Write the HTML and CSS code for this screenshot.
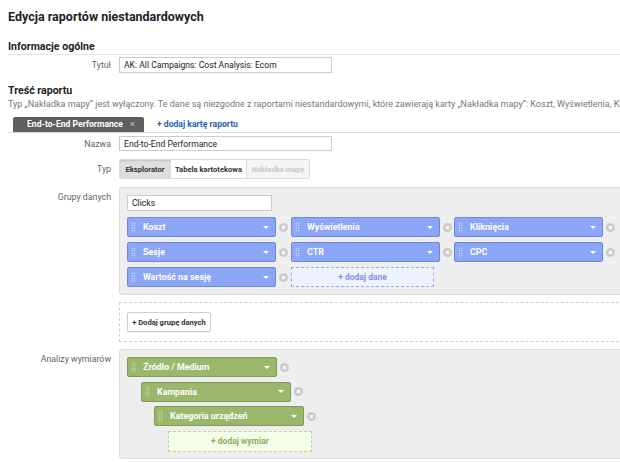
FILE: index.html
```html
<!DOCTYPE html>
<html lang="pl">
<head>
<meta charset="utf-8">
<title>Edycja raportów niestandardowych</title>
<link rel="stylesheet" href="styles.css">
</head>
<body>
<div class="page">
  <h1 class="title">Edycja raportów niestandardowych</h1>
  <h2 class="section">Informacje ogólne</h2>
  <div class="row row-tytul">
    <div class="lbl">Tytuł</div>
    <div class="input input-wide">AK: All Campaigns: Cost Analysis: Ecom</div>
  </div>

  <h2 class="section section-plain">Treść raportu</h2>
  <p class="desc">Typ „Nakładka mapy” jest wyłączony. Te dane są niezgodne z raportami niestandardowymi, które zawierają karty „Nakładka mapy”: Koszt, Wyświetlenia, Kliknięcia, CTR, CPC</p>

  <div class="tabbar">
    <div class="tab">End-to-End Performance <span class="tab-x">×</span></div>
    <a class="addtab">+ dodaj kartę raportu</a>
  </div>

  <div class="row row-nazwa">
    <div class="lbl">Nazwa</div>
    <div class="input input-wide">End-to-End Performance</div>
  </div>

  <div class="row row-typ">
    <div class="lbl">Typ</div>
    <div class="seg">
      <span class="seg-btn seg-active">Eksplorator</span>
      <span class="seg-btn seg-normal">Tabela kartotekowa</span>
      <span class="seg-btn seg-disabled">Nakładka mapy</span>
    </div>
  </div>

  <div class="row row-top row-metrics">
    <div class="lbl lbl-top">Grupy danych</div>
    <div class="box box-metrics">
      <div class="input input-clicks">Clicks</div>
      <div class="metric-grid">
        <div class="item"><div class="chip chip-blue"><span class="grip"></span><span class="chip-text">Koszt</span><span class="caret"></span></div><span class="rm"><svg width="9" height="9" viewBox="0 0 9 9"><circle cx="4.5" cy="4.5" r="4.5" fill="#cbcbcb"/><path d="M3 3L6 6M6 3L3 6" stroke="#fff" stroke-width="1.1"/></svg></span></div>
        <div class="item"><div class="chip chip-blue"><span class="grip"></span><span class="chip-text">Wyświetlenia</span><span class="caret"></span></div><span class="rm"><svg width="9" height="9" viewBox="0 0 9 9"><circle cx="4.5" cy="4.5" r="4.5" fill="#cbcbcb"/><path d="M3 3L6 6M6 3L3 6" stroke="#fff" stroke-width="1.1"/></svg></span></div>
        <div class="item"><div class="chip chip-blue"><span class="grip"></span><span class="chip-text">Kliknięcia</span><span class="caret"></span></div><span class="rm"><svg width="9" height="9" viewBox="0 0 9 9"><circle cx="4.5" cy="4.5" r="4.5" fill="#cbcbcb"/><path d="M3 3L6 6M6 3L3 6" stroke="#fff" stroke-width="1.1"/></svg></span></div>
        <div class="item"><div class="chip chip-blue"><span class="grip"></span><span class="chip-text">Sesje</span><span class="caret"></span></div><span class="rm"><svg width="9" height="9" viewBox="0 0 9 9"><circle cx="4.5" cy="4.5" r="4.5" fill="#cbcbcb"/><path d="M3 3L6 6M6 3L3 6" stroke="#fff" stroke-width="1.1"/></svg></span></div>
        <div class="item"><div class="chip chip-blue"><span class="grip"></span><span class="chip-text">CTR</span><span class="caret"></span></div><span class="rm"><svg width="9" height="9" viewBox="0 0 9 9"><circle cx="4.5" cy="4.5" r="4.5" fill="#cbcbcb"/><path d="M3 3L6 6M6 3L3 6" stroke="#fff" stroke-width="1.1"/></svg></span></div>
        <div class="item"><div class="chip chip-blue"><span class="grip"></span><span class="chip-text">CPC</span><span class="caret"></span></div><span class="rm"><svg width="9" height="9" viewBox="0 0 9 9"><circle cx="4.5" cy="4.5" r="4.5" fill="#cbcbcb"/><path d="M3 3L6 6M6 3L3 6" stroke="#fff" stroke-width="1.1"/></svg></span></div>
        <div class="item"><div class="chip chip-blue"><span class="grip"></span><span class="chip-text">Wartość na sesję</span><span class="caret"></span></div><span class="rm"><svg width="9" height="9" viewBox="0 0 9 9"><circle cx="4.5" cy="4.5" r="4.5" fill="#cbcbcb"/><path d="M3 3L6 6M6 3L3 6" stroke="#fff" stroke-width="1.1"/></svg></span></div>
        <div class="item"><div class="add add-blue">+ dodaj dane</div></div>
      </div>
    </div>
  </div>

  <div class="row row-top">
    <div class="lbl"></div>
    <div class="box-dashed">
      <span class="btn">+ Dodaj grupę danych</span>
    </div>
  </div>

  <div class="row row-top">
    <div class="lbl lbl-top">Analizy wymiarów</div>
    <div class="box box-dims">
      <div class="dim lvl0"><div class="chip chip-green"><span class="grip"></span><span class="chip-text">Źródło / Medium</span><span class="caret"></span></div><span class="rm"><svg width="9" height="9" viewBox="0 0 9 9"><circle cx="4.5" cy="4.5" r="4.5" fill="#cbcbcb"/><path d="M3 3L6 6M6 3L3 6" stroke="#fff" stroke-width="1.1"/></svg></span></div>
      <div class="dim lvl1"><div class="chip chip-green"><span class="grip"></span><span class="chip-text">Kampania</span><span class="caret"></span></div><span class="rm"><svg width="9" height="9" viewBox="0 0 9 9"><circle cx="4.5" cy="4.5" r="4.5" fill="#cbcbcb"/><path d="M3 3L6 6M6 3L3 6" stroke="#fff" stroke-width="1.1"/></svg></span></div>
      <div class="dim lvl2"><div class="chip chip-green"><span class="grip"></span><span class="chip-text">Kategoria urządzeń</span><span class="caret"></span></div><span class="rm"><svg width="9" height="9" viewBox="0 0 9 9"><circle cx="4.5" cy="4.5" r="4.5" fill="#cbcbcb"/><path d="M3 3L6 6M6 3L3 6" stroke="#fff" stroke-width="1.1"/></svg></span></div>
      <div class="dim lvl3"><div class="add add-green">+ dodaj wymiar</div></div>
    </div>
  </div>
</div>
</body>
</html>
```
FILE: styles.css
```css
html, body {
  margin: 0;
  padding: 0;
  overflow: hidden;
  background: #fff;
}
body {
  font-family: Roboto, "Liberation Sans", Arial, sans-serif;
  color: #222;
  width: 620px;
}
.page {
  width: 680px;
  padding-top: 8px;
}
.title {
  margin: 0 0 0 8px;
  font-size: 12.5px;
  line-height: 18px;
  font-weight: 700;
  color: #222;
}
.section {
  margin: 13px 0 0 8px;
  font-size: 10.6px;
  line-height: 15px;
  font-weight: 700;
  color: #222;
  border-bottom: 1px solid #e6e6e6;
}
.section-plain {
  border-bottom: none;
  margin-top: 11px;
  line-height: 14px;
}
.desc {
  margin: 0 0 0 8px;
  font-size: 9px;
  line-height: 13px;
  color: #777;
  white-space: nowrap;
}
.row {
  display: flex;
  align-items: center;
}
.row-tytul { margin-top: 2px; }
.row-nazwa { margin-top: 3px; }
.row-typ { margin-top: 8px; }
.row-top { margin-top: 7px; align-items: flex-start; }
.row-metrics { margin-top: 8px; }
.lbl {
  width: 111px;
  flex: none;
  margin-right: 8px;
  text-align: right;
  font-size: 8.8px;
  color: #666;
}
.lbl-top { padding-top: 5px; }
.input {
  box-sizing: border-box;
  border: 1px solid #ccc;
  background: #fff;
  font-size: 8.6px;
  color: #222;
  padding: 0 4px;
  display: flex;
  align-items: center;
  white-space: nowrap;
}
.input-wide {
  width: 213px;
  height: 16px;
}
.row-nazwa .input-wide { height: 15px; }
.tabbar {
  margin: 6px 0 0 8px;
  display: flex;
  align-items: flex-end;
  border-bottom: 1px solid #ddd;
  height: 15px;
}
.tab {
  margin-left: 5px;
  width: 131px;
  height: 15px;
  box-sizing: border-box;
  background: #5e5e5e;
  border-radius: 2px 2px 0 0;
  color: #fff;
  font-size: 8.6px;
  font-weight: 700;
  line-height: 15px;
  padding-left: 14px;
  white-space: nowrap;
}
.tab-x {
  font-weight: 400;
  color: #c4c4c4;
  margin-left: 5px;
  font-size: 9px;
}
.addtab {
  margin-left: 13px;
  font-size: 8.6px;
  font-weight: 700;
  color: #2563b3;
  line-height: 15px;
  white-space: nowrap;
}
.seg {
  display: flex;
  border: 1px solid #dadada;
  background: #f0f0f0;
  border-radius: 2px;
  height: 20px;
  box-sizing: border-box;
}
.seg-btn {
  display: flex;
  align-items: center;
  justify-content: center;
  font-size: 7.6px;
  font-weight: 700;
  box-sizing: border-box;
  white-space: nowrap;
}
.seg-active {
  width: 50px;
  background: #dedede;
  color: #333;
  box-shadow: inset 0 1px 2px rgba(0,0,0,0.12);
}
.seg-normal {
  width: 77px;
  background: #fff;
  color: #333;
  border-left: 1px solid #dcdcdc;
  border-right: 1px solid #dcdcdc;
}
.seg-disabled {
  width: 62px;
  background: #f5f5f5;
  color: #c9c9c9;
}
.box {
  width: 520px;
  box-sizing: border-box;
  background: #eeeeee;
  border: 1px solid #dcdcdc;
  border-radius: 3px;
}
.box-metrics {
  height: 108px;
  padding: 7px 0 0 7px;
}
.input-clicks {
  width: 145px;
  height: 16px;
  margin-bottom: 6px;
}
.metric-grid {
  display: grid;
  grid-template-columns: 164px 163px 164px;
  row-gap: 5px;
}
.item {
  display: flex;
  align-items: center;
}
.chip {
  box-sizing: border-box;
  height: 20px;
  border-radius: 2px;
  display: flex;
  align-items: center;
  color: #fff;
  font-size: 8.9px;
  font-weight: 700;
  flex: none;
}
.chip-blue {
  width: 149px;
  background: #8ba5f7;
  border: 1px solid #6f88de;
}
.chip-green {
  width: 150px;
  background: #9ab76b;
  border: 1px solid #7f9c52;
}
.grip {
  width: 5px;
  height: 11px;
  margin-left: 3px;
  background-image: radial-gradient(circle, rgba(255,255,255,0.75) 0.6px, transparent 0.9px);
  background-size: 2.5px 2.5px;
  flex: none;
}
.chip-text {
  margin-left: 7px;
  flex: 1;
  white-space: nowrap;
}
.caret {
  width: 0;
  height: 0;
  border-left: 3.5px solid transparent;
  border-right: 3.5px solid transparent;
  border-top: 3.5px solid #fff;
  margin-right: 6px;
  flex: none;
}
.rm {
  margin-left: 3px;
  width: 9px;
  height: 9px;
  display: flex;
}
.add {
  box-sizing: border-box;
  height: 20px;
  display: flex;
  align-items: center;
  justify-content: center;
  font-size: 8.5px;
  font-weight: 700;
  white-space: nowrap;
}
.add-blue {
  width: 143px;
  background: #eef2fd;
  border: 1px dashed #97abef;
  color: #7f95e6;
}
.box-dashed {
  width: 520px;
  height: 40px;
  box-sizing: border-box;
  border: 1px dashed #cfcfcf;
  background: #fff;
  padding: 9px 7px 0;
  display: flex;
  align-items: flex-start;
}
.btn {
  display: flex;
  align-items: center;
  justify-content: center;
  box-sizing: border-box;
  width: 84px;
  height: 20px;
  border: 1px solid #cfcfcf;
  border-radius: 2px;
  background: #fff;
  box-shadow: 0 1px 1px rgba(0,0,0,0.06);
  font-size: 7.6px;
  font-weight: 700;
  color: #333;
  white-space: nowrap;
}
.box-dims {
  height: 110px;
  padding: 7px 0 0 7px;
  display: flex;
  flex-direction: column;
  gap: 4.5px;
}
.dim {
  display: flex;
  align-items: center;
}
.lvl1 { margin-left: 14px; }
.lvl2 { margin-left: 27px; }
.lvl3 { margin-left: 41px; }
.add-green {
  width: 144px;
  height: 21px;
  background: #f4fde7;
  border: 1px dashed #bcd595;
  color: #8fae5f;
}
```
